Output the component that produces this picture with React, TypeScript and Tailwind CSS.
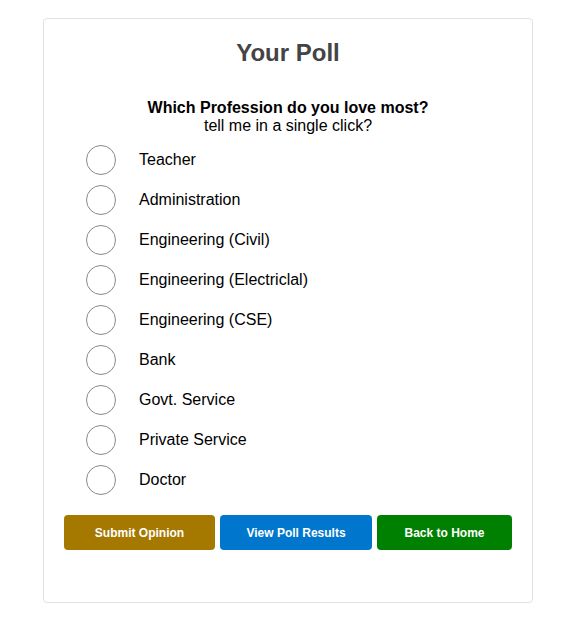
import { useState } from 'react';

const options = [
  'Teacher',
  'Administration',
  'Engineering (Civil)',
  'Engineering (Electriclal)',
  'Engineering (CSE)',
  'Bank',
  'Govt. Service',
  'Private Service',
  'Doctor',
];

export default function App() {
  const [choice, setChoice] = useState<string | null>(null);

  return (
    <div className="min-h-screen bg-white" style={{ fontFamily: '"Liberation Sans", Arial, sans-serif' }}>
      <div className="ml-[43px] mt-[18px] w-[490px] rounded border border-[#e2e2e2] bg-white pt-[20px] pb-[52px]">
        <h1 className="text-center text-[24px] leading-[28px] font-bold text-[#444]">Your Poll</h1>

        <div className="mt-[32px] text-center text-[16px] leading-[18px] text-black">
          <div className="font-bold">Which Profession do you love most?</div>
          <div>tell me in a single click?</div>
        </div>

        <div className="mt-[10px] flex flex-col gap-[10px] pl-[42px]">
          {options.map(opt => (
            <label key={opt} className="flex h-[30px] cursor-pointer items-center" onClick={() => setChoice(opt)}>
              <span className="flex h-[30px] w-[30px] items-center justify-center rounded-full border border-[#888] bg-white">
                {choice === opt && <span className="h-[16px] w-[16px] rounded-full bg-[#0075ff]" />}
              </span>
              <span className="ml-[23px] text-[16px] text-black">{opt}</span>
            </label>
          ))}
        </div>

        <div className="mt-[20px] flex justify-center gap-[5px] text-[12px] font-bold text-white">
          <button className="h-[35px] w-[151px] rounded-[4px] bg-[#a57800]">Submit Opinion</button>
          <button className="h-[35px] w-[152px] rounded-[4px] bg-[#0077cc]">View Poll Results</button>
          <button className="h-[35px] w-[135px] rounded-[4px] bg-[#008000]">Back to Home</button>
        </div>
      </div>
    </div>
  );
}
